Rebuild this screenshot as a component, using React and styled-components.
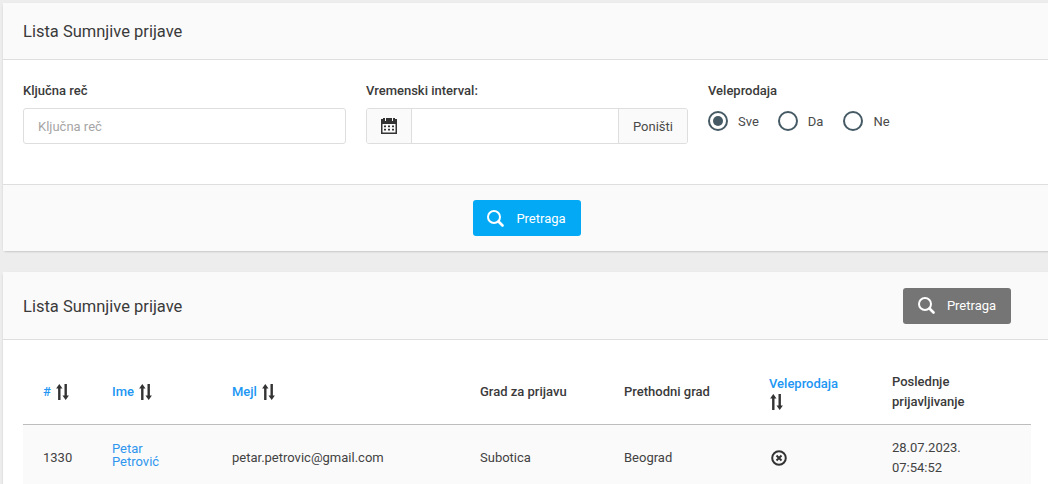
import React from "react";
import styled, { createGlobalStyle } from "styled-components";

const GlobalStyle = createGlobalStyle`
  *{
    margin:0;
    padding:0;
    box-sizing:border-box;
  }
  html, body{
    overflow:hidden;
    height:100%;
  }
  body{
    background:#ededed;
    font-family:Roboto, "Liberation Sans", sans-serif;
    color:#3e3e3e;
  }
`;

const Page = styled.div`
  width:1051px;
  height:484px;
  padding:3px 0 0 3px;
  display:flex;
  flex-direction:column;
  gap:21px;
  overflow:hidden;
`;

const Card = styled.section`
  background:#fff;
  border-radius:4px 0 0 4px;
  box-shadow:0 1px 2px rgba(0,0,0,.16);
`;

const CardHeader = styled.header`
  height:57px;
  display:flex;
  align-items:center;
  justify-content:space-between;
  padding:0 40px 0 20px;
  background:#fafafa;
  border-bottom:1px solid #dedede;
`;

const ListHeader = styled(CardHeader)`
  height:68px;
  h2{
    margin-top:2px;
  }
`;

const Title = styled.h2`
  font-size:16.5px;
  font-weight:400;
  color:#3a3a3a;
`;

const Filters = styled.div`
  height:124px;
  display:flex;
  padding:23px 20px 0;
`;

const Field = styled.div`
  width:${(p) => p.$width}px;
  margin-right:${(p) => p.$gap || 0}px;
`;

const Label = styled.label`
  display:block;
  font-size:13px;
  font-weight:500;
  line-height:16px;
  margin-bottom:${(p) => p.$space || 9}px;
  color:#3a3a3a;
`;

const TextInput = styled.input`
  display:block;
  width:100%;
  height:36px;
  padding:0 14px;
  border:1px solid #dedede;
  border-radius:3px;
  font:13px Roboto, sans-serif;
  outline:none;
  &::placeholder{
    color:#a5a5a5;
  }
`;

const InputGroup = styled.div`
  display:flex;
  height:36px;
  border:1px solid #dedede;
  border-radius:3px;
  overflow:hidden;
`;

const Addon = styled.div`
  width:${(p) => p.$width}px;
  display:flex;
  align-items:center;
  justify-content:center;
  background:#fafafa;
  font-size:13px;
  color:#4a4a4a;
`;

const GroupInput = styled.input`
  flex:1;
  min-width:0;
  border:0;
  border-left:1px solid #dedede;
  border-right:1px solid #dedede;
  outline:none;
`;

const RadioRow = styled.div`
  display:flex;
  align-items:center;
  height:20px;
`;

const RadioMark = styled.span`
  width:20px;
  height:20px;
  border-radius:50%;
  border:2px solid #455a64;
  display:flex;
  align-items:center;
  justify-content:center;
  &::after{
    content:"";
    width:10px;
    height:10px;
    border-radius:50%;
    background:${(p) => (p.$checked ? "#455a64" : "transparent")};
  }
`;

const RadioText = styled.span`
  font-size:13px;
  color:#4a4a4a;
  margin-left:10px;
  margin-right:${(p) => p.$gap}px;
`;

const CardFooter = styled.footer`
  height:67px;
  display:flex;
  align-items:center;
  justify-content:center;
  background:#fafafa;
  border-top:1px solid #dedede;
  padding-right:1px;
`;

const Button = styled.button`
  width:108px;
  height:36px;
  border:0;
  border-radius:3px;
  display:flex;
  align-items:center;
  justify-content:center;
  gap:12px;
  background:${(p) => p.$bg};
  color:#fff;
  font:13px Roboto, sans-serif;
`;

const TableWrap = styled.div`
  padding:0 20px;
`;

const Table = styled.table`
  width:1008px;
  border-collapse:collapse;
  table-layout:fixed;
`;

const Th = styled.th`
  width:${(p) => p.$width}px;
  height:84px;
  padding:21px 20px 0;
  text-align:left;
  font-size:13px;
  font-weight:500;
  line-height:20px;
  color:${(p) => (p.$link ? "#2196f3" : "#3a3a3a")};
  border-bottom:1px solid #bdbdbd;
`;

const SortIcon = styled.svg`
  display:${(p) => (p.$block ? "block" : "inline-block")};
  vertical-align:-4px;
  margin-left:${(p) => (p.$block ? "1px" : "2px")};
  margin-top:0;
`;

const Row = styled.tr`
  background:#fafafa;
`;

const Td = styled.td`
  height:66px;
  padding:2px 0 0 20px;
  font-size:13px;
  line-height:20px;
  color:#424242;
`;

const NameLink = styled.a`
  display:block;
  color:#2f96ee;
  line-height:13px;
`;

const NameCell = styled.div`
  padding-bottom:6px;
`;

const CrossWrap = styled.div`
  margin-left:2px;
`;

const SearchIcon = () => (
  <svg width="17" height="17" viewBox="0 0 17 17" fill="none" stroke="currentColor">
    <circle cx="7" cy="7" r="6" strokeWidth="2" />
    <path d="M11.500 11.500l4 4" strokeWidth="2.600" strokeLinecap="round" />
  </svg>
);

const CalendarIcon = () => (
  <svg width="16" height="16" viewBox="0 0 16 16" fill="#333">
    <path fillRule="evenodd" d="M0 1h2V0h2v3h1V0h6v3h1V0h2v1h2v15H0V1zM1.500 6v8.500h13V6h-13z" />
    <rect x="3" y="7.500" width="2" height="1.700" />
    <rect x="7" y="7.500" width="2" height="1.700" />
    <rect x="11" y="7.500" width="2" height="1.700" />
    <rect x="3" y="10.800" width="2" height="1.700" />
    <rect x="7" y="10.800" width="2" height="1.700" />
    <rect x="11" y="10.800" width="2" height="1.700" />
  </svg>
);

const Sort = ({ block }) => (
  <SortIcon $block={block} width="13" height="16" viewBox="0 0 13 16" fill="#333">
    <path d="M3.300 0L6.500 4.500H4.500v11.500h-2.400V4.500H.1z" />
    <path d="M9.700 16L6.500 11.500h2V0h2.400v11.500h2z" />
  </SortIcon>
);

const CrossCircle = () => (
  <svg width="16" height="16" viewBox="0 0 16 16" fill="none" stroke="#333" style={{ display: "block" }}>
    <circle cx="8" cy="8" r="6.800" strokeWidth="2" />
    <path d="M5.500 5.500l5 5M10.500 5.500l-5 5" strokeWidth="2" />
  </svg>
);

export default function App() {
  return (
    <Page>
      <GlobalStyle />
      <Card>
        <CardHeader>
          <Title>Lista Sumnjive prijave</Title>
        </CardHeader>
        <Filters>
          <Field $width={323} $gap={20}>
            <Label>Ključna reč</Label>
            <TextInput placeholder="Ključna reč" />
          </Field>
          <Field $width={322} $gap={20}>
            <Label>Vremenski interval:</Label>
            <InputGroup>
              <Addon $width={44}>
                <CalendarIcon />
              </Addon>
              <GroupInput />
              <Addon $width={68}>Poništi</Addon>
            </InputGroup>
          </Field>
          <Field $width={300}>
            <Label $space={12}>Veleprodaja</Label>
            <RadioRow>
              <RadioMark $checked />
              <RadioText $gap={19}>Sve</RadioText>
              <RadioMark />
              <RadioText $gap={20}>Da</RadioText>
              <RadioMark />
              <RadioText $gap={0}>Ne</RadioText>
            </RadioRow>
          </Field>
        </Filters>
        <CardFooter>
          <Button $bg="#03a9f4">
            <SearchIcon />
            Pretraga
          </Button>
        </CardFooter>
      </Card>
      <Card>
        <ListHeader>
          <Title>Lista Sumnjive prijave</Title>
          <Button $bg="#757575">
            <SearchIcon />
            Pretraga
          </Button>
        </ListHeader>
        <TableWrap>
          <Table>
            <thead>
              <tr>
                <Th $width={69} $link># <Sort /></Th>
                <Th $width={120} $link>Ime <Sort /></Th>
                <Th $width={248} $link>Mejl <Sort /></Th>
                <Th $width={144}>Grad za prijavu</Th>
                <Th $width={145}>Prethodni grad</Th>
                <Th $width={123} $link>Veleprodaja<Sort block /></Th>
                <Th $width={159}>Poslednje prijavljivanje</Th>
              </tr>
            </thead>
            <tbody>
              <Row>
                <Td>1330</Td>
                <Td>
                  <NameCell>
                    <NameLink>Petar</NameLink>
                    <NameLink>Petrović</NameLink>
                  </NameCell>
                </Td>
                <Td>petar.petrovic@gmail.com</Td>
                <Td>Subotica</Td>
                <Td>Beograd</Td>
                <Td><CrossWrap><CrossCircle /></CrossWrap></Td>
                <Td>28.07.2023.<br />07:54:52</Td>
              </Row>
            </tbody>
          </Table>
        </TableWrap>
      </Card>
    </Page>
  );
}
